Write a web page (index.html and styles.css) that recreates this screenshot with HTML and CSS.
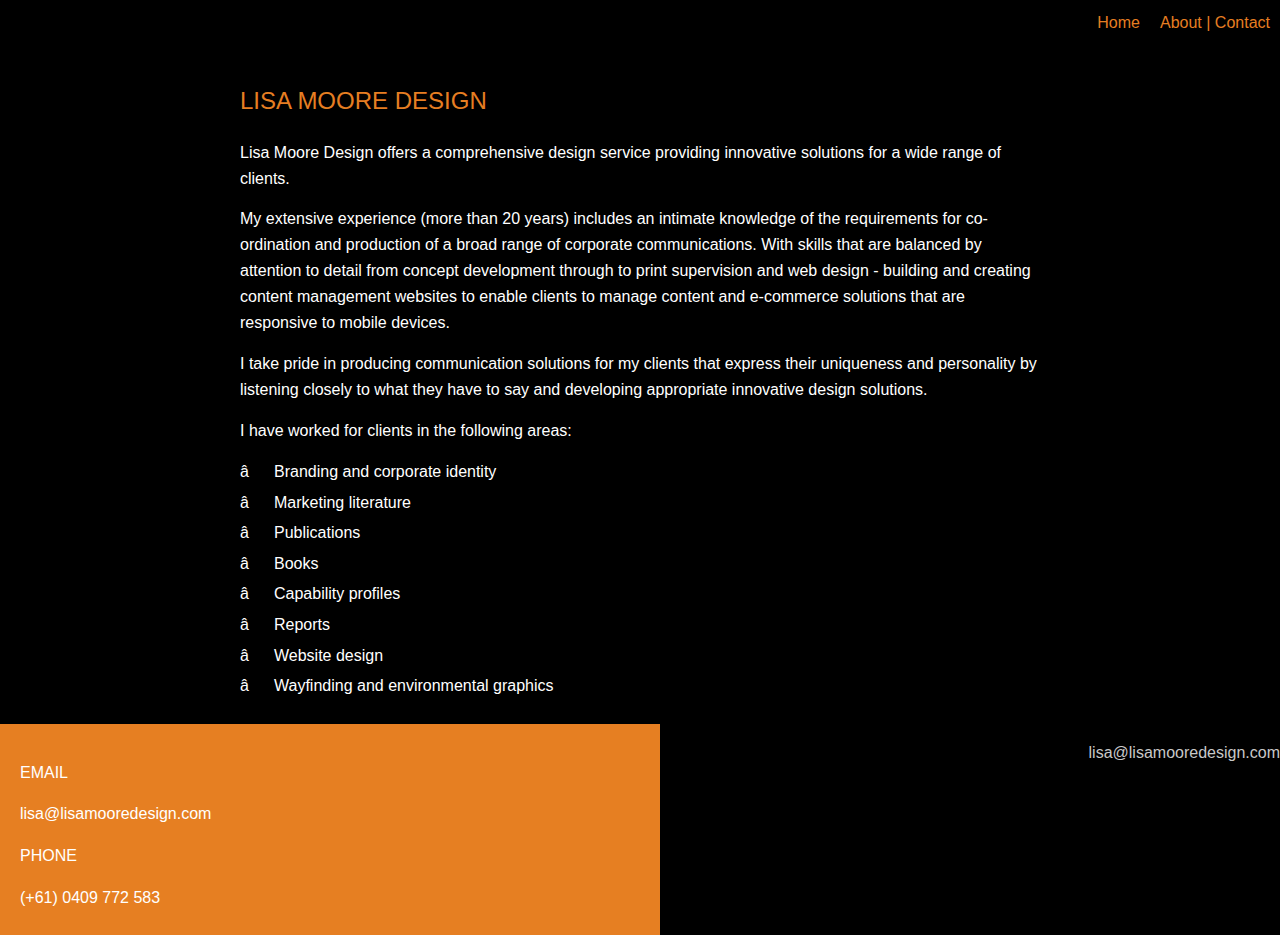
FILE: index.html
```html
<!DOCTYPE html>
<html lang="en">
<head>
<meta charset="utf-8">
<title>Lisa Moore Design</title>
<link rel="stylesheet" href="styles.css">
</head>
<body>
<header class="topbar">
  <nav class="nav">
    <a href="#" class="nav-link">Home</a>
    <span class="nav-link"><a href="#">About</a> | <a href="#">Contact</a></span>
  </nav>
</header>
<main class="content">
  <h1 class="title">LISA MOORE DESIGN</h1>
  <p class="para para-intro">Lisa Moore Design offers a comprehensive design service providing innovative solutions for a wide range of clients.</p>
  <p class="para">My extensive experience (more than 20 years) includes an intimate knowledge of the requirements for co-ordination and production of a broad range of corporate communications. With skills that are balanced by attention to detail from concept development through to print supervision and web design - building and creating content management websites to enable clients to manage content and e-commerce solutions that are responsive to mobile devices.</p>
  <p class="para">I take pride in producing communication solutions for my clients that express their uniqueness and personality by listening closely to what they have to say and developing appropriate innovative design solutions.</p>
  <p class="para">I have worked for clients in the following areas:</p>
  <ul class="areas">
    <li class="area"><span class="bullet">â</span><span>Branding and corporate identity</span></li>
    <li class="area"><span class="bullet">â</span><span>Marketing literature</span></li>
    <li class="area"><span class="bullet">â</span><span>Publications</span></li>
    <li class="area"><span class="bullet">â</span><span>Books</span></li>
    <li class="area"><span class="bullet">â</span><span>Capability profiles</span></li>
    <li class="area"><span class="bullet">â</span><span>Reports</span></li>
    <li class="area"><span class="bullet">â</span><span>Website design</span></li>
    <li class="area"><span class="bullet">â</span><span>Wayfinding and environmental graphics</span></li>
  </ul>
</main>
<footer class="footer">
  <div class="contact">
    <p class="contact-item">EMAIL</p>
    <p class="contact-item">lisa@lisamooredesign.com</p>
    <p class="contact-item">PHONE</p>
    <p class="contact-item">(+61) 0409 772 583</p>
  </div>
  <div class="footer-right">lisa@lisamooredesign.com</div>
</footer>
</body>
</html>
```
FILE: styles.css
```css
* { box-sizing: border-box; }
html, body {
  margin: 0;
  padding: 0;
  background: #000;
}
body {
  font-family: "Liberation Sans", Arial, sans-serif;
  font-size: 16px;
  color: #fff;
}
a { color: inherit; text-decoration: none; }

.topbar {
  height: 44px;
  padding: 13px 10px 0 0;
}
.nav {
  display: flex;
  justify-content: flex-end;
  gap: 20px;
  line-height: 20px;
  color: #e67e22;
}

.content {
  width: 800px;
  margin: 0 auto;
  padding-top: 43px;
}
.title {
  margin: 0 0 25px;
  font-size: 24px;
  line-height: 28px;
  font-weight: normal;
  color: #e67e22;
}
.para {
  margin: 0 0 15px;
  line-height: 26px;
}
.para-intro {
  margin-bottom: 14px;
}
.areas {
  list-style: none;
  margin: -2px 0 0;
  padding: 0;
}
.area {
  display: flex;
  line-height: 30.6px;
}
.bullet {
  width: 34px;
  flex: none;
}

.footer {
  display: grid;
  grid-template-columns: 660px 1fr;
  margin-top: 22px;
}
.contact {
  background: #e67f22;
  padding: 39px 20px 28px;
}
.contact-item {
  margin: 0 0 21.7px;
  line-height: 20px;
}
.contact-item:last-child { margin-bottom: 0; }
.footer-right {
  text-align: right;
  padding-top: 19px;
  line-height: 20px;
  color: #c8c8c8;
}
```
